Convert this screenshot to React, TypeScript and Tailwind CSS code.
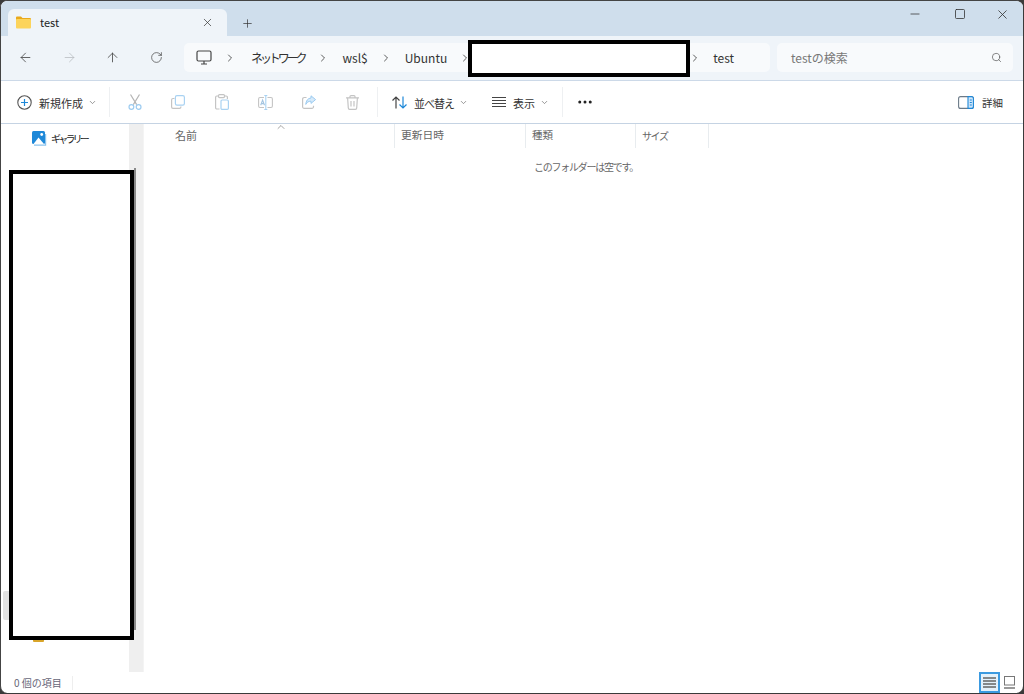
import { ArrowLeft, ArrowRight, ArrowUp, ChevronDown, ChevronRight, ChevronUp, Minus, MoreHorizontal, Plus, RotateCw, Search, Square, X } from "lucide-react";

const font = { fontFamily: '"Noto Sans CJK JP", "Liberation Sans", sans-serif' };

function Crumb({ label, className }: { label: string; className: string }) {
  return (
    <div className="flex items-center">
      <ChevronRight size={12} strokeWidth={1.6} className="text-[#333]" />
      <span className={`${className} text-[12px] text-[#333]`}>{label}</span>
    </div>
  );
}

function ColHead({ label, width, pad, extra }: { label: string; width: string; pad: string; extra?: string }) {
  return (
    <div className={`${width} ${pad} ${extra ?? ""} flex h-[24px] shrink-0 items-center border-r border-[#e8ecef] pb-[2px] text-[#666]`}>
      {label}
    </div>
  );
}

function Sep() {
  return <div className="h-[30px] w-px shrink-0 bg-[#eef0f2]" />;
}

function ScissorsIcon() {
  return (
    <svg width="14" height="16" viewBox="0 0 14 16" fill="none" strokeWidth="1.2">
      <path d="M2.5 .5 8.7 10.6M11.5 .5 5.3 10.6" stroke="#b5b5b5" />
      <circle cx="3.4" cy="13" r="2.4" stroke="#9ccbf0" />
      <circle cx="10.6" cy="13" r="2.4" stroke="#9ccbf0" />
    </svg>
  );
}

function CopyIcon() {
  return (
    <svg width="14" height="14" viewBox="0 0 14 14" fill="none" strokeWidth="1.2">
      <path d="M3.5 3.5H2A1.4 1.4 0 0 0 .6 4.9V12a1.4 1.4 0 0 0 1.4 1.4h6.5a1.4 1.4 0 0 0 1.4-1.4v-.6" stroke="#c4c4c4" />
      <rect x="4.4" y="0.6" width="9" height="9.6" rx="1.6" stroke="#a9d2f2" />
    </svg>
  );
}

function PasteIcon() {
  return (
    <svg width="14" height="16" viewBox="0 0 14 16" fill="none" strokeWidth="1.2">
      <path d="M3.5 2H1.8a1.2 1.2 0 0 0-1.2 1.2v10.6A1.2 1.2 0 0 0 1.8 15H4.5" stroke="#c4c4c4" />
      <path d="M9.5 2h1.7a1.2 1.2 0 0 1 1.2 1.2V5" stroke="#c4c4c4" />
      <rect x="3.5" y="0.6" width="6" height="3" rx="1" stroke="#c4c4c4" />
      <rect x="6" y="6" width="7.4" height="9.4" rx="1.2" stroke="#a9d2f2" />
    </svg>
  );
}

function RenameIcon() {
  return (
    <svg width="15" height="15" viewBox="0 0 15 15" fill="none" strokeWidth="1.1">
      <path d="M6 2.5H2a1.4 1.4 0 0 0-1.4 1.4v7.2A1.4 1.4 0 0 0 2 12.5h4M9.5 2.5H13a1.4 1.4 0 0 1 1.4 1.4v7.2a1.4 1.4 0 0 1-1.4 1.4H9.5" stroke="#c4c4c4" />
      <path d="M7.8.5v14M6.3.5h3M6.3 14.5h3" stroke="#a9d2f2" />
      <path d="M2.7 10.2 4.6 5l1.9 5.2M3.4 8.6h2.4" stroke="#a3c4e0" />
    </svg>
  );
}

function ShareIcon() {
  return (
    <svg width="14" height="14" viewBox="0 0 14 14" fill="none">
      <path d="M4.5 2.5H2.2A1.6 1.6 0 0 0 .6 4.1v7.7a1.6 1.6 0 0 0 1.6 1.6h7.7a1.6 1.6 0 0 0 1.6-1.6v-1" stroke="#c4c4c4" strokeWidth="1.2" />
      <path d="M9 .8 13.6 4.6 9 8.4V6.2C6.4 6.2 5 7.2 3.8 9.4 4 6 5.6 3.2 9 3Z" fill="#d6eafa" stroke="#9ccbf0" strokeWidth="1" strokeLinejoin="round" />
    </svg>
  );
}

function TrashIcon() {
  return (
    <svg width="13" height="15" viewBox="0 0 13 15" fill="none" stroke="#c4c4c4" strokeWidth="1.2">
      <path d="M0 2.8h13M4 2.8V1.6A1 1 0 0 1 5 .6h3a1 1 0 0 1 1 1v1.2" />
      <path d="M1.6 2.8l.7 10.2a1.4 1.4 0 0 0 1.4 1.4h5.6a1.4 1.4 0 0 0 1.4-1.4l.7-10.2" />
      <path d="M5 6v5.5M8 6v5.5" />
    </svg>
  );
}

function SortIcon() {
  return (
    <svg width="15" height="13" viewBox="0 0 15 13" fill="none" strokeWidth="1.2">
      <path d="M4 12.5V1M.5 4.5 4 1l3.5 3.5" stroke="#444" />
      <path d="M11 .5V12M7.5 8.5 11 12l3.5-3.5" stroke="#1e88d8" />
    </svg>
  );
}

function ViewIcon() {
  return (
    <svg width="14" height="10" viewBox="0 0 14 10" fill="none" stroke="#444">
      <path d="M0 .5h14M0 3.5h14M0 6.5h14M0 9.5h14" />
    </svg>
  );
}

function GalleryIcon() {
  return (
    <svg width="15" height="15" viewBox="0 0 15 15">
      <rect x="0" y="0" width="13" height="13" rx="1.5" fill="#1e88d8" />
      <path d="M1.5 13 6.5 6.5 12 13Z" fill="#ffffff" />
      <circle cx="9.7" cy="3.5" r="1.4" fill="#ffffff" />
      <path d="M2 14.2h11.6V3" fill="none" stroke="#8cc4ee" strokeWidth="1.2" />
    </svg>
  );
}

function FolderIcon() {
  return (
    <svg width="15" height="13" viewBox="0 0 15 13">
      <path d="M0 1.5A1 1 0 0 1 1 .5h4l1.5 1.5H14a1 1 0 0 1 1 1V5H0Z" fill="#e9a91c" />
      <rect x="0" y="3" width="15" height="9.5" rx="1" fill="#fcd45c" />
    </svg>
  );
}

function DetailsIcon() {
  return (
    <svg width="16" height="13" viewBox="0 0 16 13" fill="none">
      <rect x="0.6" y="0.6" width="14.8" height="11.8" rx="2" stroke="#6b7a88" strokeWidth="1.1" />
      <path d="M10 .6h3.4a2 2 0 0 1 2 2v7.8a2 2 0 0 1-2 2H10Z" fill="#cfe6fa" stroke="#1e88d8" strokeWidth="1.1" />
      <path d="M11.8 4h2M11.8 6.5h2M11.8 9h2" stroke="#1e88d8" />
    </svg>
  );
}

export default function App() {
  return (
    <div className="relative h-[694px] w-[1024px] overflow-hidden bg-[#3a3a3a]" style={font}>
      <div className="flex h-[693px] w-[1023px] flex-col overflow-hidden rounded-[7px] border-l border-t border-[#444] bg-white">
        {/* title bar */}
        <div className="flex h-[35px] shrink-0 bg-[#cfdeec]">
          <div className="ml-[7px] mt-[8px] flex h-[27px] w-[219px] items-center rounded-t-[6px] bg-[#eff4f9] pl-[8px] pr-[13px]">
            <FolderIcon />
            <span className="ml-[9px] flex-1 text-[11px] text-[#222]">test</span>
            <X size={13} strokeWidth={1.3} className="text-[#333]" />
          </div>
          <Plus size={13} strokeWidth={1.3} className="ml-[14px] mt-[16px] text-[#333]" />
          <div className="ml-auto mr-[13px] mt-[6px] flex h-[14px] items-center text-[#333]">
            <Minus size={14} strokeWidth={1.3} />
            <Square size={12} strokeWidth={1.6} className="ml-[32px]" />
            <X size={15} strokeWidth={1.3} className="ml-[29px]" />
          </div>
        </div>

        {/* address row */}
        <div className="flex h-[45px] shrink-0 items-center border-b border-[#ccd9e8] bg-[#eff4f9] pb-[1px]">
          <div className="flex w-[183px] shrink-0 items-center text-[#444]">
            <ArrowLeft size={15} strokeWidth={1.3} className="ml-[17px]" />
            <ArrowRight size={15} strokeWidth={1.2} className="ml-[29px] text-[#b5b9bd]" />
            <ArrowUp size={15} strokeWidth={1.3} className="ml-[28px]" />
            <RotateCw size={13} strokeWidth={1.3} className="ml-[30px]" />
          </div>
          <div className="flex h-[29px] w-[586px] shrink-0 items-center rounded-[5px] bg-[#f8fafc] pl-[12px]">
            <svg width="16" height="15" viewBox="0 0 16 15" fill="none" stroke="#444" strokeWidth="1.2" className="mr-[12px]">
              <rect x="1" y="1" width="14" height="10" rx="1.5" />
              <path d="M5 14h6M8 11v3" />
            </svg>
            <Crumb label="ネットワーク" className="ml-[15px] mr-[13px] tracking-[-3.1px]" />
            <Crumb label="wsl$" className="ml-[13px] mr-[12px]" />
            <Crumb label="Ubuntu" className="ml-[13px] mr-[12px]" />
            <ChevronRight size={12} strokeWidth={1.6} className="text-[#333]" />
            <div className="w-[218px]" />
            <ChevronRight size={12} strokeWidth={1.6} className="text-[#333]" />
            <span className="ml-[12px] text-[12px] text-[#333]">test</span>
          </div>
          <div className="ml-[7px] flex h-[29px] w-[236px] shrink-0 items-center justify-between rounded-[5px] bg-[#f8fafc] pl-[14px] pr-[11px]">
            <span className="text-[12px] text-[#777]">testの検索</span>
            <Search size={11} strokeWidth={1.5} className="text-[#555]" />
          </div>
        </div>

        {/* command bar */}
        <div className="flex h-[43px] shrink-0 items-center border-b border-[#c5d3e3] pl-[16px] pr-[20px]">
          <svg width="15" height="15" viewBox="0 0 15 15" fill="none">
            <circle cx="7.5" cy="7.5" r="6.7" stroke="#555" strokeWidth="1.1" />
            <path d="M7.5 4v7M4 7.5h7" stroke="#1e88d8" strokeWidth="1.2" />
          </svg>
          <span className="ml-[7px] mt-[2px] text-[11px] text-[#333]">新規作成</span>
          <ChevronDown size={9} className="ml-[5px] text-[#777]" />
          <div className="ml-[12px]"><Sep /></div>
          <div className="flex w-[267px] shrink-0 items-center">
            <div className="ml-[18px]"><ScissorsIcon /></div>
            <div className="ml-[29px]"><CopyIcon /></div>
            <div className="ml-[30px]"><PasteIcon /></div>
            <div className="ml-[29px]"><RenameIcon /></div>
            <div className="ml-[29px]"><ShareIcon /></div>
            <div className="ml-[30px]"><TrashIcon /></div>
          </div>
          <Sep />
          <div className="ml-[14px]"><SortIcon /></div>
          <span className="ml-[7px] mt-[2px] text-[11px] tracking-[-1px] text-[#333]">並べ替え</span>
          <ChevronDown size={9} className="ml-[5px] text-[#777]" />
          <div className="ml-[24px]"><ViewIcon /></div>
          <span className="ml-[7px] mt-[2px] text-[11px] text-[#333]">表示</span>
          <ChevronDown size={9} className="ml-[5px] text-[#777]" />
          <div className="ml-[13px]"><Sep /></div>
          <MoreHorizontal size={18} strokeWidth={2} className="ml-[13px] text-[#222]" />
          <div className="ml-auto flex items-center">
            <DetailsIcon />
            <span className="ml-[8px] mt-[2px] text-[10.5px] text-[#333]">詳細</span>
          </div>
        </div>

        {/* body */}
        <div className="flex min-h-0 flex-1">
          <div className="flex w-[128px] shrink-0 flex-col pl-[31px] pt-[7px]">
            <div className="flex items-center">
              <GalleryIcon />
              <span className="ml-[4px] text-[10px] tracking-[-2.8px] text-[#222]">ギャラリー</span>
            </div>
          </div>
          <div className="relative w-[14px] shrink-0 bg-[#efefef]">
            <div className="absolute left-[5px] top-[44px] h-[462px] w-[2px] bg-[#8a8a8a]" />
          </div>
          <div className="min-w-0 flex-1 border-l border-[#f4f4f4] pl-[1px]">
            <div className="relative flex">
              <ColHead label="名前" width="w-[250px]" pad="pl-[30px]" extra="text-[11px]" />
              <ColHead label="更新日時" width="w-[131px]" pad="pl-[6px]" extra="text-[10.75px]" />
              <ColHead label="種類" width="w-[110px]" pad="pl-[6px]" extra="text-[10.5px]" />
              <ColHead label="サイズ" width="w-[73px]" pad="pl-[6px]" extra="text-[10px] tracking-[-1.4px]" />
              <ChevronUp size={12} strokeWidth={1.2} className="absolute left-[130px] top-[-3px] text-[#666]" />
            </div>
            <p className="ml-[389px] mt-[11px] text-[10px] tracking-[-1.25px] text-[#666]">このフォルダーは空です。</p>
          </div>
        </div>

        {/* status bar */}
        <div className="flex h-[21px] shrink-0 items-center pl-[13px] pr-[7px]">
          <span className="text-[10px] text-[#667]">0 個の項目</span>
          <div className="ml-[10px] h-[14px] w-px bg-[#eee]" />
          <div className="ml-auto flex items-center">
            <div className="flex h-[21px] w-[21px] items-center justify-center border-2 border-[#3b9ae0] bg-[#e3f1fb]">
              <svg width="13" height="11" viewBox="0 0 13 11" fill="none" stroke="#666" strokeWidth="1.4">
                <path d="M0 1h13M0 4h13M0 7h13M0 10h13" />
              </svg>
            </div>
            <svg width="13" height="13" viewBox="0 0 13 13" fill="none" stroke="#777" className="ml-[3px]">
              <rect x="1.5" y="0.5" width="10" height="8.5" />
              <path d="M1 12h11" strokeWidth="1.5" />
            </svg>
          </div>
        </div>
      </div>

      {/* sidebar leftovers peeking out around the redaction box */}
      <div className="absolute left-[3px] top-[591px] h-[29px] w-[6px] rounded-l-[2px] bg-[#e2e2e2]" />
      <div className="absolute left-[33px] top-[636px] h-[6px] w-[11px] rounded-[1px] bg-[#d9a52a]" />

      {/* redaction boxes */}
      <div className="absolute left-[468px] top-[40px] h-[37px] w-[222px] border-[4px] border-black bg-white" />
      <div className="absolute left-[9px] top-[170px] h-[470px] w-[125px] border-[4px] border-black bg-white" />
    </div>
  );
}
